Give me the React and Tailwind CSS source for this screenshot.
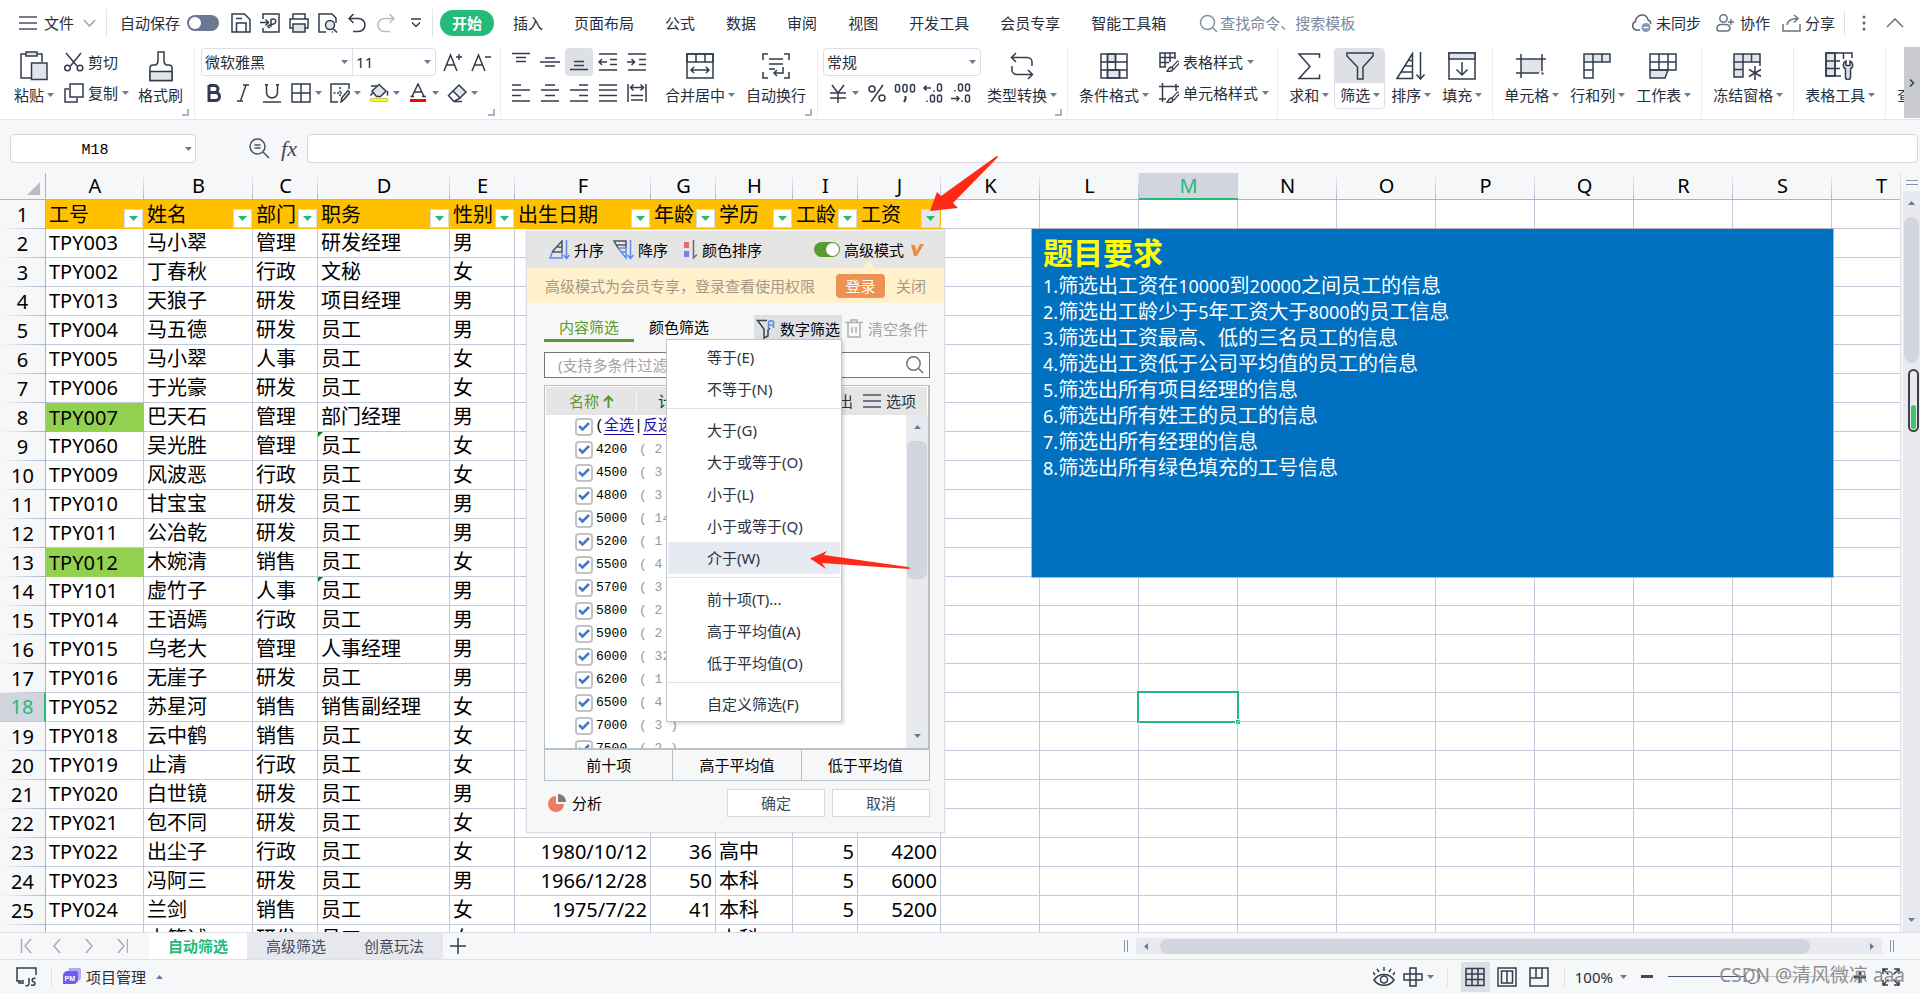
import React from "react";

const INK = "#333c4d";
const SOFT = "#e1e4e8";

/* ---------- drawing helpers ---------- */

function Ic({ w = 20, h = 20, color = INK, sw = 1.5, children, className = "" }) {
  return (
    <svg
      aria-hidden="true"
      width={w}
      height={h}
      viewBox={`0 0 ${w} ${h}`}
      fill="none"
      stroke={color}
      strokeWidth={sw}
      className={`shrink-0 ${className}`}
    >
      {children}
    </svg>
  );
}

function Caret({ up = false, className = "" }) {
  return (
    <svg aria-hidden="true" width="7" height="4" viewBox="0 0 7 4" fill="#6c7a96" className={`shrink-0 ${className}`}>
      <path d={up ? "M0 4 3.500 0 7 4z" : "M0 0h7L3.500 4z"} />
    </svg>
  );
}

const Brush = () => (
  <>
    <path d="M20 9.500 13.500 16.500" strokeWidth="4" />
    <path d="M19.500 10 14 16" strokeWidth="1.500" stroke="#fff" />
    <path d="M7.500 19.500c2-.6 1.500-3.500 4-4.200 2.500-.4 3 2 1.500 3.300-1.500 1.200-3.500 1.200-5.500.9z" fill={SOFT} />
  </>
);

/* ---------- top menu ---------- */

const menuTabs = ["插入", "页面布局", "公式", "数据", "审阅", "视图", "开发工具", "会员专享", "智能工具箱"];

function IconButton({ label, children, className = "" }) {
  return (
    <button type="button" aria-label={label} className={`flex shrink-0 items-center justify-center ${className}`}>
      {children}
    </button>
  );
}

function MenuBar() {
  return (
    <header className="flex h-[46px] shrink-0 items-center bg-white pl-[18px] pr-4">
      <button type="button" className="flex items-center">
        <Ic w={20} h={16} color="#4b5464">
          <path d="M1 2h18M1 8h18M1 14h18" />
        </Ic>
        <span className="ml-1.5">文件</span>
        <Ic w={13} h={8} color="#9aa1ad" className="ml-[9px]">
          <path d="M1 1l5.500 6L12 1" />
        </Ic>
      </button>
      <span className="ml-2.5 h-7 w-px bg-[#e1e3e8]" />
      <label className="ml-[13px] flex items-center gap-[7px]">
        自动保存
        <span className="relative flex">
          <input type="checkbox" className="peer h-4 w-8 appearance-none rounded-full bg-[#6c7791]" />
          <span className="pointer-events-none absolute left-0.5 top-0.5 size-3 rounded-full bg-white" />
        </span>
      </label>
      <div className="ml-3 flex items-center gap-[9px]">
        <IconButton label="保存">
          <Ic>
            <path d="M1 1h12.500L19 6.500V19H1z" />
            <path d="M5.500 19v-9h9.500v9M5 5.500h6" />
          </Ic>
        </IconButton>
        <IconButton label="输出为PDF">
          <Ic>
            <path d="M3 6V1h16v18H3v-4M0 9.500h8M5.500 6.500l3 3-3 3" />
            <path d="M11 14V6.500c4-1.500 5.500.5 4.500 3-1 2-3.500 2-6 2.500-2 .8-2 3 .5 2.500" />
          </Ic>
        </IconButton>
        <IconButton label="打印">
          <Ic>
            <path d="M4 6V1h12v5M4 15H1V6h18v9h-3" />
            <path d="M4 11h12v8H4z" fill={SOFT} />
          </Ic>
        </IconButton>
        <IconButton label="打印预览">
          <Ic>
            <path d="M8 19H1V1h13l4 4v5" />
            <circle cx="12" cy="12" r="4.500" fill={SOFT} />
            <path d="M15 15.500l4 4M15 19h-1" />
          </Ic>
        </IconButton>
        <IconButton label="撤销">
          <Ic>
            <path d="M6.500 1 2 5.500 6.500 10M2 5.500h9.500a6 6 0 0 1 0 13H6" />
          </Ic>
        </IconButton>
        <IconButton label="恢复">
          <Ic color="#b9bdc4">
            <path d="M13.500 1 18 5.500 13.500 10M18 5.500H8.500a6 6 0 0 0 0 13H14" />
          </Ic>
        </IconButton>
        <IconButton label="更多" className="ml-[5px]">
          <Ic w={12} h={10}>
            <path d="M1 1h10M2 4.500l4 4 4-4" />
          </Ic>
        </IconButton>
      </div>
      <span className="ml-2.5 h-7 w-px bg-[#e1e3e8]" />
      <nav className="ml-[7px] flex items-center gap-[7px]">
        <button type="button" className="h-[26px] rounded-full bg-[#23ba7a] px-3 font-bold text-white">
          开始
        </button>
        {menuTabs.map((t) => (
          <button key={t} type="button" className="shrink-0 whitespace-nowrap px-3">
            {t}
          </button>
        ))}
      </nav>
      <label className="ml-[21px] flex items-center gap-0.5">
        <Ic w={19} h={19} color="#8791a8">
          <circle cx="8.500" cy="8.500" r="7" />
          <path d="M13.500 13.500l4.500 4.500" />
        </Ic>
        <input
          aria-label="查找"
          placeholder="查找命令、搜索模板"
          className="w-36 bg-transparent outline-none placeholder:text-[#7d879e] placeholder:opacity-100"
        />
      </label>
      <div className="ml-auto flex shrink-0 items-center">
        <button type="button" className="flex items-center gap-1">
          <Ic w={21} h={18} color="#5a6474">
            <path d="M9 16H5a4.500 4.500 0 0 1-.5-8.500C4.500 4 7.500 1 11 1c3 0 5.500 2 6 5 1.500.5 3 2 2.500 4" />
            <circle cx="15" cy="13.500" r="4.500" fill="#8497b5" stroke="none" />
            <path d="M12.500 13.500h5" stroke="#fff" />
          </Ic>
          未同步
        </button>
        <button type="button" className="ml-[15px] flex items-center gap-1.5">
          <Ic w={18} h={18} color="#6a7383">
            <circle cx="7.500" cy="4.500" r="3.700" />
            <path d="M1 15c0-3 2-4.500 4-4.500h5c2 0 3.500 1 4 3.500 0 2-1 3-3 3H3c-1.500 0-2-1-2-2z M12 8h6M15 5v6" />
          </Ic>
          协作
        </button>
        <button type="button" className="ml-3 flex items-center gap-1">
          <Ic w={19} h={18} color="#6a7383">
            <path d="M1 10v7h17v-7M5 11c.5-4.500 4-6.500 11-6.500M12 1l4 3.500-4 4" />
          </Ic>
          分享
        </button>
        <span className="ml-[9px] h-[26px] w-px bg-[#e1e3e8]" />
        <IconButton label="选项" className="ml-[17px]">
          <svg width="4" height="16" viewBox="0 0 4 16" fill="#5a6474">
            <circle cx="2" cy="2" r="1.500" />
            <circle cx="2" cy="8" r="1.500" />
            <circle cx="2" cy="14" r="1.500" />
          </svg>
        </IconButton>
        <IconButton label="收起功能区" className="ml-5">
          <Ic w={18} h={10} color="#6a7383">
            <path d="M1 9l8-8 8 8" />
          </Ic>
        </IconButton>
      </div>
    </header>
  );
}

/* ---------- ribbon ---------- */

function Big({ label, caret = true, active = false, children }) {
  return (
    <button
      type="button"
      className={`flex h-[61px] shrink-0 flex-col items-stretch rounded-sm border ${
        active ? "border-[#dde1e6]" : "border-transparent"
      }`}
    >
      <span className={`flex h-[34px] items-center justify-center ${active ? "bg-[#dde1e6]" : ""}`}>{children}</span>
      <span className="flex h-6 items-center justify-center gap-[3px] whitespace-nowrap px-[5px]">
        {label}
        {caret && <Caret className="-mr-px" />}
      </span>
    </button>
  );
}

function Group({ children, corner = false, className = "" }) {
  return (
    <div className={`relative flex h-[72px] shrink-0 border-r border-[#eaecef] px-[5px] pt-0.5 ${className}`}>
      {children}
      {corner && (
        <svg aria-hidden="true" width="7" height="7" className="absolute bottom-0.5 right-[5px]" fill="none" stroke="#a9b4c6" strokeWidth="2">
          <path d="M6 0v6H0" />
        </svg>
      )}
    </div>
  );
}

function Cell({ label, caret = false, active = false, children }) {
  return (
    <button type="button" aria-label={label} className="flex shrink-0 items-center">
      <span className={`flex size-7 items-center justify-center rounded-sm ${active ? "bg-[#dde1e6]" : ""}`}>{children}</span>
      {caret && <Caret className="mr-1" />}
    </button>
  );
}

function Small({ label, caret = false, children }) {
  return (
    <button type="button" className="flex h-7 items-center gap-1 whitespace-nowrap">
      {children}
      {label}
      {caret && <Caret />}
    </button>
  );
}

function Pick({ label, value, className }) {
  return (
    <span className={`relative flex h-7 items-center border border-[#dcdfe5] ${className}`}>
      <select aria-label={label} className="h-full w-full appearance-none bg-transparent pl-[3px] outline-none">
        <option>{value}</option>
      </select>
      <Caret className="pointer-events-none absolute right-1" />
    </span>
  );
}

function Ribbon() {
  return (
    <div className="relative z-10 flex h-[74px] shrink-0 overflow-hidden border-b border-[#e3e5e9] bg-white">
      <Group corner className="pl-2">
        <Big label="粘贴">
          <Ic w={28} h={30}>
            <path d="M7 3H1v24h10M17 3h5v8" />
            <path d="M6 1h11v4H6z" fill={SOFT} />
            <path d="M11.500 12H27v16.500H11.500z" fill={SOFT} />
          </Ic>
        </Big>
        <div className="ml-[5px] mr-[3px] flex flex-col gap-[3px]">
          <Small label="剪切">
            <Ic>
              <path d="M2 1l11 13M17 1 6.500 14" />
              <circle cx="3.500" cy="16" r="2.800" />
              <circle cx="16" cy="16" r="2.800" />
            </Ic>
          </Small>
          <Small label="复制" caret>
            <Ic>
              <path d="M5 6H1v13h12v-4" />
              <path d="M6 1h13v13H6z" fill="#fff" />
            </Ic>
          </Small>
        </div>
        <Big label="格式刷" caret={false}>
          <Ic w={24} h={31}>
            <path d="M1 29.500V17c0-2 1-3 3-3h2.500C8 13.500 9 12 9 10V1h6v9c0 2 1 3.500 2.500 4H20c2 0 3 1 3 3v12.500z" />
            <path d="M1 20.500h22v9H1z" fill={SOFT} />
          </Ic>
        </Big>
      </Group>

      <Group corner>
        <div className="flex flex-col gap-[3px]">
          <div className="flex">
            <Pick label="字体" value="微软雅黑" className="ml-px w-[152px] rounded-l-sm" />
            <Pick label="字号" value="11" className="-ml-px mr-[3px] w-[84px] rounded-r-sm" />
            <Cell label="增大字号">
              <Ic w={20} h={20}>
                <path d="M1 19 7.500 3 14 19M3.500 13h8M13 5h6M16 2v6" />
              </Ic>
            </Cell>
            <Cell label="减小字号">
              <Ic w={20} h={20}>
                <path d="M1 19 7.500 3 14 19M3.500 13h8M14 5h6" />
              </Ic>
            </Cell>
          </div>
          <div className="flex">
            <span className="flex gap-px">
              <Cell label="加粗">
                <Ic w={14} h={18} sw={3}>
                  <path d="M2 1.500h5.500a3.500 3.500 0 0 1 0 7H2m0 0h6.500a4 4 0 0 1 0 8H2zM2 1v15" />
                </Ic>
              </Cell>
              <Cell label="倾斜">
                <Ic w={12} h={18}>
                  <path d="M9 1 3.500 17M6 1h6M0 17h6" />
                </Ic>
              </Cell>
              <Cell label="下划线">
                <Ic w={20} h={19}>
                  <path d="M4.500 0v8.500a5.500 5.500 0 0 0 11 0V0M1 18h18M3 .7h3M14 .7h3" />
                </Ic>
              </Cell>
            </span>
            <span className="ml-px flex">
              <Cell label="边框" caret>
                <Ic>
                  <path d="M1 1h18v18H1zM10 1v18M1 10h18" />
                </Ic>
              </Cell>
              <Cell label="绘图边框" caret>
                <Ic>
                  <path d="M8 19H1V1h18v5" />
                  <path d="M3.500 10H12M10 4v9" strokeDasharray="2 1.500" />
                  <path d="M11 19l1-4.500 6-7 2 2-6 7z" fill={SOFT} />
                </Ic>
              </Cell>
              <Cell label="填充颜色" caret>
                <Ic>
                  <path d="M3 8 10 1.500 17 8l-5.500 5.500h-4z" fill={SOFT} />
                  <path d="M2 3h6M1.500 12.500 4 9.500M18.500 12.500V8" />
                  <rect x="1" y="15.500" width="18" height="3" rx="1.500" fill="#ff0" stroke="#9a9a50" strokeWidth=".5" />
                </Ic>
              </Cell>
              <Cell label="字体颜色" caret>
                <Ic>
                  <path d="M4 13.500 10 1l6 12.500M6.500 9h7M2.500 13.500H6M14 13.500h4" />
                  <path d="M2 17.500h16" stroke="#f00" strokeWidth="3" />
                </Ic>
              </Cell>
              <Cell label="清除" caret>
                <Ic>
                  <path d="M6 8 12 2l7 7-6 6z" fill={SOFT} />
                  <path d="M6 8l-4.500 4.500 5.500 6 6-3.500M7 18.500h8" />
                </Ic>
              </Cell>
            </span>
          </div>
        </div>
      </Group>

      <Group corner>
        <div className="mx-px flex flex-col gap-[3px]">
          <div className="flex gap-px">
            <Cell label="顶端对齐">
              <Ic>
                <path d="M1 1.500h18M5 5.500h10M5 9.500h10" />
              </Ic>
            </Cell>
            <Cell label="垂直居中">
              <Ic>
                <path d="M5 6h10M0 10h20M5 14h10" />
              </Ic>
            </Cell>
            <Cell label="底端对齐" active>
              <Ic>
                <path d="M5 9.500h10M5 13.500h10M1 17.500h18" />
              </Ic>
            </Cell>
            <Cell label="减少缩进">
              <Ic>
                <path d="M1 2h18M12 7.500h7M12 12.500h7M1 18h18M9 10H1M4 7l-3 3 3 3" />
              </Ic>
            </Cell>
            <Cell label="增加缩进">
              <Ic>
                <path d="M1 2h18M12 7.500h7M12 12.500h7M1 18h18M0 10h7M4.500 7l3 3-3 3" />
              </Ic>
            </Cell>
          </div>
          <div className="flex gap-px">
            <Cell label="左对齐">
              <Ic>
                <path d="M1 2h9M1 7h18M1 12.500h9M1 18h18" />
              </Ic>
            </Cell>
            <Cell label="水平居中">
              <Ic>
                <path d="M5 2h10M1 7h18M5 12.500h10M1 18h18" />
              </Ic>
            </Cell>
            <Cell label="右对齐">
              <Ic>
                <path d="M10 2h9M1 7h18M10 12.500h9M1 18h18" />
              </Ic>
            </Cell>
            <Cell label="两端对齐">
              <Ic>
                <path d="M1 2h18M1 7h18M1 12.500h18M1 18h18" />
              </Ic>
            </Cell>
            <Cell label="分散对齐">
              <Ic>
                <path d="M1 1v18M19 1v18M4 12.500h12M4 17h12M3.500 4.500h13M6.500 1.500l-3 3 3 3M13.500 1.500l3 3-3 3" />
              </Ic>
            </Cell>
          </div>
        </div>
        <span className="w-[7px]" />
        <Big label="合并居中">
          <Ic w={28} h={26}>
            <path d="M1 1h26v24H1z" />
            <path d="M1 1h26v8H1zM10 1v8M19 1v8M5 17h18M8 14l-3 3 3 3M20 14l3 3-3 3" />
          </Ic>
        </Big>
        <Big label="自动换行" caret={false}>
          <Ic w={28} h={26}>
            <path d="M6 1H1v6M22 1h5v6M6 25H1v-6M22 25h5v-6M7 6h14M7 11h14M7 16h6M21 14v6H12M15 17l-3 3 3 3" />
          </Ic>
        </Big>
      </Group>

      <Group corner>
        <div className="flex flex-col gap-[3px]">
          <Pick label="数字格式" value="常规" className="w-[158px] rounded-sm" />
          <div className="flex pl-px">
            <Cell label="货币" caret>
              <Ic w={18} h={19}>
                <path d="M3 1l6 8 6-8M9 9v10M1 9h16M1 14h16" />
              </Ic>
            </Cell>
            <Cell label="百分比">
              <Ic w={18} h={18}>
                <circle cx="4" cy="5" r="3" />
                <circle cx="14" cy="14" r="3" />
                <path d="M15 1 3 18" />
              </Ic>
            </Cell>
            <Cell label="千位分隔">
              <Ic w={22} h={20}>
                <rect x="1.500" y="1.500" width="4" height="7.500" rx="2" />
                <rect x="9" y="1.500" width="4" height="7.500" rx="2" />
                <rect x="16.500" y="1.500" width="4" height="7.500" rx="2" />
                <path d="M11.500 13v3l-1.500 3" strokeWidth="2" />
              </Ic>
            </Cell>
            <Cell label="增加小数位">
              <Ic w={22} h={20}>
                <rect x="15.500" y="1" width="4" height="7" rx="2" />
                <rect x="8.500" y="12" width="4" height="7" rx="2" />
                <rect x="15.500" y="12" width="4" height="7" rx="2" />
                <path d="M9 5H2M4.500 2.500 2 5l2.500 2.500M12 7.500v1.500M5 17.500V19" />
              </Ic>
            </Cell>
            <Cell label="减少小数位">
              <Ic w={22} h={20}>
                <rect x="8.500" y="1" width="4" height="7" rx="2" />
                <rect x="15.500" y="1" width="4" height="7" rx="2" />
                <rect x="15.500" y="12" width="4" height="7" rx="2" />
                <path d="M1 15.500h8M6.500 13l2.500 2.500L6.500 18M12 17.500V19M5 7v1.500" />
              </Ic>
            </Cell>
          </div>
        </div>
        <Big label="类型转换">
          <Ic w={24} h={28}>
            <path d="M6 1 1.500 5.500 6 10M1.500 5.500H17c3 0 5 2 5 4.500v4M18 18l4.500 4.500L18 27M22.500 22.500H7c-3 0-5-2-5-4.500v-4" />
          </Ic>
        </Big>
      </Group>

      <Group className="pr-2">
        <Big label="条件格式">
          <Ic w={28} h={26}>
            <path d="M7.500 1h8v8h-8zM7.500 17h12v8h-12z" fill={SOFT} />
            <path d="M1 1h26v24H1zM1 9h26M1 17h26M7.500 1v24M15.500 1v16M19.500 17v8" />
          </Ic>
        </Big>
        <div className="ml-[5px] flex flex-col gap-[3px]">
          <Small label="表格样式" caret>
            <Ic>
              <path d="M7 15H1V1h15v6M1 5.500h15M1 10.500h9M6 1v14M11 1v9" />
              <Brush />
            </Ic>
          </Small>
          <Small label="单元格样式" caret>
            <Ic>
              <path d="M3.500 0v19M0 3.500h20M17 1v7M0 16h7" />
              <Brush />
            </Ic>
          </Small>
        </div>
      </Group>

      <Group>
        <Big label="求和">
          <Ic w={24} h={27}>
            <path d="M22.500 5V1H2l11 12.500L2 25.500h20.500v-4" />
          </Ic>
        </Big>
        <Big label="筛选" active>
          <Ic w={28} h={28}>
            <path d="M1 1h26v3L17 15v12h-5.500V15L1 4z" />
          </Ic>
        </Big>
        <Big label="排序">
          <Ic w={30} h={28}>
            <path d="M1 26.500 16.500 1.500v25zM4.500 20h12M8 14h8.500M12 8.500h4M24.500 0v27M20.500 22.500l4 4.500 4-4.500" />
          </Ic>
        </Big>
        <Big label="填充">
          <Ic w={28} h={28}>
            <path d="M1 1h26v26H1z" />
            <path d="M1 1h26v6H1z" fill={SOFT} />
            <path d="M14 10v13M8.500 17.500 14 23l5.500-5.500" />
          </Ic>
        </Big>
      </Group>

      <Group>
        <Big label="单元格">
          <Ic w={30} h={24}>
            <path d="M5 5h21v14H5z" fill={SOFT} stroke="none" />
            <path d="M5 0v24M26 0v17M0 5h30M0 19h23" />
            <path d="M25.500 19.500h2" strokeWidth="2" />
          </Ic>
        </Big>
        <Big label="行和列">
          <Ic w={28} h={26}>
            <path d="M1 1h26v8H1z" fill={SOFT} />
            <path d="M1 9v16h9V9M1 17h9M10 1v8M19 1v8" />
          </Ic>
        </Big>
        <Big label="工作表">
          <Ic w={28} h={26}>
            <path d="M1 17h18l-3 8H1z" fill={SOFT} />
            <path d="M1 1h26v16H1zM1 9h26M10 1v16M19 1v16" />
          </Ic>
        </Big>
      </Group>

      <Group>
        <Big label="冻结窗格">
          <Ic w={30} h={27}>
            <path d="M1 1h26v8H10v15H1z" fill={SOFT} />
            <path d="M27 9v4M1 9h9M1 16.500h9M10 1v8M18.500 1v8" />
            <path d="M22 13v14M16 16.500l12 7M28 16.500l-12 7" />
          </Ic>
        </Big>
      </Group>
      <Group>
        <Big label="表格工具">
          <Ic w={30} h={28}>
            <path d="M1 1h9v23H1z" fill={SOFT} />
            <path d="M16 24H1V1h26v5M1 9h14M1 16.500h14M10 1v23M18.500 1v6" />
            <path d="M21 9a4.500 4.500 0 0 0-.5 8v8.500c0 2.500 5 2.500 5 0V17a4.500 4.500 0 0 0-.5-8v4.500h-4z" fill={SOFT} />
          </Ic>
        </Big>
      </Group>
      <div className="flex min-w-0 flex-1 overflow-hidden pl-[5px] pt-0.5">
        <Big label="查找">
          <span />
        </Big>
      </div>
      <button
        type="button"
        aria-label="向右滚动"
        className="mt-px flex h-[71px] w-4 shrink-0 items-center justify-center bg-[#c9cbd1]"
      >
        <Ic w={6} h={8}>
          <path d="M1 .5l3.500 3.500L1 7.500" />
        </Ic>
      </button>
    </div>
  );
}

function FormulaBar() {
  return (
    <div className="flex h-[53px] shrink-0 items-center pl-2.5 pr-0.5 pt-1">
      <div className="relative flex items-center">
        <input
          aria-label="名称框"
          defaultValue="M18"
          className="h-[29px] w-[186px] rounded-sm border border-[#d5d8de] bg-white pr-4 pt-1 text-center font-['Liberation_Mono','Noto_Sans_CJK_SC',monospace] text-black outline-none"
        />
        <Caret className="pointer-events-none absolute right-1" />
      </div>
      <IconButton label="查找" className="ml-[53px]">
        <Ic w={21} h={21} color="#4b5464">
          <circle cx="8.500" cy="8.500" r="7.500" />
          <path d="M14 14l6 6M5.500 7h6M5.500 10h6" />
        </Ic>
      </IconButton>
      <button
        type="button"
        aria-label="插入函数"
        className="ml-2.5 w-[18px] font-['Liberation_Serif','Noto_Sans_CJK_SC',serif] text-[22px] italic leading-7 text-[#3f4857]"
      >
        fx
      </button>
      <input aria-label="编辑栏" className="ml-[9px] h-[29px] min-w-0 flex-1 rounded-sm border border-[#d5d8de] bg-white px-2 outline-none" />
    </div>
  );
}

/* ---------- sheet ---------- */

const columns = [
  ["A", "w-[98px]"],
  ["B", "w-[109px]"],
  ["C", "w-[65px]"],
  ["D", "w-[132px]"],
  ["E", "w-[65px]"],
  ["F", "w-[136px]"],
  ["G", "w-[65px]"],
  ["H", "w-[77px]"],
  ["I", "w-[65px]"],
  ["J", "w-[83px]"],
  ["K", "w-[99px]"],
  ["L", "w-[99px]"],
  ["M", "w-[99px]"],
  ["N", "w-[99px]"],
  ["O", "w-[99px]"],
  ["P", "w-[99px]"],
  ["Q", "w-[99px]"],
  ["R", "w-[99px]"],
  ["S", "w-[99px]"],
  ["T", "w-[99px]"],
];

const headings = ["工号", "姓名", "部门", "职务", "性别", "出生日期", "年龄", "学历", "工龄", "工资"];

const people = [
  ["TPY003", "马小翠", "管理", "研发经理", "男"],
  ["TPY002", "丁春秋", "行政", "文秘", "女"],
  ["TPY013", "天狼子", "研发", "项目经理", "男"],
  ["TPY004", "马五德", "研发", "员工", "男"],
  ["TPY005", "马小翠", "人事", "员工", "女"],
  ["TPY006", "于光豪", "研发", "员工", "女"],
  ["TPY007", "巴天石", "管理", "部门经理", "男"],
  ["TPY060", "吴光胜", "管理", "员工", "女"],
  ["TPY009", "风波恶", "行政", "员工", "女"],
  ["TPY010", "甘宝宝", "研发", "员工", "男"],
  ["TPY011", "公冶乾", "研发", "员工", "男"],
  ["TPY012", "木婉清", "销售", "员工", "女"],
  ["TPY101", "虚竹子", "人事", "员工", "男"],
  ["TPY014", "王语嫣", "行政", "员工", "男"],
  ["TPY015", "乌老大", "管理", "人事经理", "男"],
  ["TPY016", "无崖子", "研发", "员工", "男"],
  ["TPY052", "苏星河", "销售", "销售副经理", "女"],
  ["TPY018", "云中鹤", "销售", "员工", "女"],
  ["TPY019", "止清", "行政", "员工", "女"],
  ["TPY020", "白世镜", "研发", "员工", "男"],
  ["TPY021", "包不同", "研发", "员工", "女"],
  ["TPY022", "出尘子", "行政", "员工", "女", "1980/10/12", "36", "高中", "5", "4200"],
  ["TPY023", "冯阿三", "研发", "员工", "男", "1966/12/28", "50", "本科", "5", "6000"],
  ["TPY024", "兰剑", "销售", "员工", "女", "1975/7/22", "41", "本科", "5", "5200"],
  ["TPY025", "古笃诚", "研发", "员工", "女", "1981/7/21", "35", "本科", "4", "3500"],
];

const greenIds = ["TPY007", "TPY012"];
const flagged = ["TPY060", "TPY101"];
const numeric = [5, 6, 8, 9];

function RowHead({ n }) {
  const on = n === 18;
  return (
    <th
      scope="row"
      className={`p-0 text-center font-normal leading-7 ${
        on
          ? "border-b border-r-2 border-b-[#c3c9da] border-r-[#23ba7a] bg-[#d2d5dd] text-[#23ba7a]"
          : "border-r border-[#aab4cc] bg-[#f6f7f9] bg-[linear-gradient(to_right,transparent,#aab4cc)] bg-[length:100%_1px] bg-bottom bg-no-repeat"
      }`}
    >
      {n}
    </th>
  );
}

function Sheet() {
  return (
    <table className="w-[1931px] table-fixed border-separate border-spacing-0 bg-white text-xl text-black">
      <colgroup>
        <col className="w-[46px]" />
        {columns.map(([c, w]) => (
          <col key={c} className={w} />
        ))}
      </colgroup>
      <thead>
        <tr className="h-[27px]">
          <th className="border-b border-r border-[#aab4cc] bg-[#f6f7f9] p-0">
            <svg aria-hidden="true" width="13" height="13" className="ml-auto mr-[5px] mt-1" fill="#b9bcc2">
              <path d="M13 0v13H0z" />
            </svg>
          </th>
          {columns.map(([c]) => (
            <th
              key={c}
              scope="col"
              className={`p-0 text-center font-normal leading-6 ${
                c === "M"
                  ? "border-b-2 border-[#23ba7a] bg-[#d2d5dd] text-[#23ba7a]"
                  : "border-b border-[#aab4cc] bg-[#f6f7f9] bg-[linear-gradient(to_bottom,transparent,#aab4cc)] bg-[length:1px_100%] bg-right bg-no-repeat"
              }`}
            >
              {c}
            </th>
          ))}
        </tr>
      </thead>
      <tbody>
        <tr className="h-[29px]">
          <RowHead n={1} />
          {columns.map(([c], i) =>
            headings[i] ? (
              <td key={c} className="relative bg-[#ffc000] p-0 pl-[3px] leading-7">
                {headings[i]}
                <button
                  type="button"
                  aria-label={`筛选${headings[i]}`}
                  className={`absolute bottom-px right-px flex size-[19px] items-center justify-center border border-[#d5d9e2] ${
                    c === "J" ? "bg-[#e6e8ee]" : "bg-white"
                  }`}
                >
                  <svg width="9" height="5" fill="#23ba7a">
                    <path d="M0 0h9L4.500 5z" />
                  </svg>
                </button>
              </td>
            ) : (
              <td key={c} className="border-b border-r border-[#c3c9da] p-0" />
            ),
          )}
        </tr>
        {people.map((p, r) => (
          <tr key={p[0]} className="h-[29px]">
            <RowHead n={r + 2} />
            {columns.map(([c], i) => (
              <td
                key={c}
                className={`relative whitespace-nowrap p-0 px-[3px] leading-7 ${numeric.includes(i) ? "text-right" : ""} ${
                  i === 0 && greenIds.includes(p[0]) ? "bg-[#92d050]" : "border-b border-r border-[#c3c9da]"
                }`}
              >
                {p[i]}
                {i === 3 && flagged.includes(p[0]) && (
                  <svg aria-hidden="true" width="5" height="5" className="absolute left-0 top-0" fill="#0a8019">
                    <path d="M0 0h5L0 5z" />
                  </svg>
                )}
                {c === "M" && r === 16 && (
                  <span className="absolute -inset-0.5 border-2 border-[#23ba7a]">
                    <span className="absolute -bottom-1 -right-1 size-1.5 border border-white bg-[#23ba7a]" />
                  </span>
                )}
              </td>
            ))}
          </tr>
        ))}
      </tbody>
    </table>
  );
}

const tasks = [
  "1.筛选出工资在10000到20000之间员工的信息",
  "2.筛选出工龄少于5年工资大于8000的员工信息",
  "3.筛选出工资最高、低的三名员工的信息",
  "4.筛选出工资低于公司平均值的员工的信息",
  "5.筛选出所有项目经理的信息",
  "6.筛选出所有姓王的员工的信息",
  "7.筛选出所有经理的信息",
  "8.筛选出所有绿色填充的工号信息",
];

/* Digits are set slightly smaller than the Chinese characters around them. */
function TaskLine({ text }) {
  return (
    <p>
      {text.split(/([\d.]+)/).map((part, i) =>
        i % 2 ? (
          <span key={i} className="text-lg leading-none">
            {part}
          </span>
        ) : (
          part
        ),
      )}
    </p>
  );
}

function TaskNote() {
  return (
    <section className="absolute left-[1031px] top-[55px] h-[350px] w-[803px] border border-[#b5b5b5] bg-[#0070c0] px-[11px] pt-1 text-xl leading-[26px] text-white">
      <h2 className="text-3xl font-bold leading-10 text-[#ff0]">题目要求</h2>
      {tasks.map((t) => (
        <TaskLine key={t} text={t} />
      ))}
    </section>
  );
}

/* ---------- filter panel ---------- */

const values = [
  ["4200", 2],
  ["4500", 3],
  ["4800", 3],
  ["5000", 14],
  ["5200", 1],
  ["5500", 4],
  ["5700", 3],
  ["5800", 2],
  ["5900", 2],
  ["6000", 32],
  ["6200", 1],
  ["6500", 4],
  ["7000", 3],
  ["7500", 2],
];

const menuGroups = [
  ["等于(E)", "不等于(N)"],
  ["大于(G)", "大于或等于(O)", "小于(L)", "小于或等于(Q)", "介于(W)"],
  ["前十项(T)...", "高于平均值(A)", "低于平均值(O)"],
  ["自定义筛选(F)"],
];

function Tick({ label }) {
  return (
    <span className="relative flex">
      <input
        type="checkbox"
        defaultChecked
        aria-label={label}
        className="size-[18px] appearance-none rounded-sm border-2 border-[#c3c3c3] bg-white"
      />
      <svg aria-hidden="true" width="12" height="9" className="pointer-events-none absolute left-[3px] top-1" fill="none" stroke="#4377c9" strokeWidth="2.500">
        <path d="M1 4l3.500 3.500L11 1" />
      </svg>
    </span>
  );
}

function NumberMenu() {
  return (
    <div
      role="menu"
      className="absolute left-[139px] top-[109px] flex w-[176px] flex-col border border-[#c4c6ca] bg-white pb-px pt-px text-[#2b3340] shadow-[2px_2px_3px_rgba(0,0,0,0.15)]"
    >
      {menuGroups.map((g, i) => (
        <div key={i} className={`flex flex-col px-px ${i ? "mt-[3px] border-t border-[#dfe1e5] pt-[5px]" : ""}`}>
          {g.map((m) => (
            <button
              key={m}
              type="button"
              role="menuitem"
              className={`h-8 pl-[39px] text-left ${m === "介于(W)" ? "bg-[#e7eaf0]" : ""}`}
            >
              {m}
            </button>
          ))}
        </div>
      ))}
    </div>
  );
}

function FilterPanel() {
  return (
    <section className="absolute left-[526px] top-14 flex h-[604px] w-[419px] flex-col border border-[#dcdde0] bg-[#f7f7f7] pt-px text-black shadow-[0_0_2px_rgba(0,0,0,0.1)]">
      <div className="flex h-[37px] shrink-0 items-center bg-[#e5e5e5] pl-[22px]">
        <button type="button" className="flex items-center gap-1">
          <Ic w={21} h={20} color="#4b5464">
            <path d="M3 12 13 1v11M8.500 7H13M4 12h9" />
            <path d="M3.500 12 1 18h12v-6" stroke="#5b8de8" />
            <path d="M17.500 0v18M14.500 15l3 3.500 3-3.500" stroke="#5b8de8" />
          </Ic>
          升序
        </button>
        <button type="button" className="ml-[9px] flex items-center gap-1">
          <Ic w={21} h={20} color="#4b5464">
            <path d="M13 8V1H1l4 7M3 5h10" />
            <path d="M5 8h8v10L5 8M7.500 12H13" stroke="#5b8de8" />
            <path d="M17.500 0v18M14.500 15l3 3.500 3-3.500" stroke="#5b8de8" />
          </Ic>
          降序
        </button>
        <button type="button" className="ml-[15px] flex items-center gap-[5px]">
          <Ic w={14} h={20} color="#6a6a6a">
            <path d="M1 2h5v6H1z" fill="#e66a6a" stroke="none" />
            <path d="M1 11h5v6H1z" fill="#6f83ea" stroke="none" />
            <path d="M10.500 0v18l3.500-3.500" />
          </Ic>
          颜色排序
        </button>
        <label className="ml-[52px] flex items-center gap-1">
          <span className="relative flex">
            <input type="checkbox" defaultChecked className="h-[15px] w-[26px] appearance-none rounded-full bg-[#5a9a32]" />
            <span className="pointer-events-none absolute right-px top-px size-[13px] rounded-full bg-white" />
          </span>
          高级模式
        </label>
        <svg aria-hidden="true" width="13" height="12" className="ml-[7px]" fill="#ee8b45">
          <path d="M0 1h4l1.500 6L9 0h4L6 12H3z" />
        </svg>
      </div>
      <div className="relative flex h-[35px] shrink-0 items-center bg-[#fff1cb] pl-[18px] text-[#a49a87]">
        <svg aria-hidden="true" width="12" height="7" className="absolute -top-[7px] left-[336px]" fill="#fff1cb">
          <path d="M6 0l6 7H0z" />
        </svg>
        高级模式为会员专享，登录查看使用权限
        <button type="button" className="ml-[21px] h-6 w-[49px] rounded-sm bg-[#ee9252] text-white">
          登录
        </button>
        <button type="button" className="ml-[11px]">
          关闭
        </button>
      </div>

      <div className="mt-3 flex h-[27px] shrink-0 pl-[17px]">
        <button type="button" className="h-[27px] w-[90px] border-b-[3px] border-[#5a9a32] text-[#5a9a32]">
          内容筛选
        </button>
        <button type="button" className="ml-[15px] h-[27px] border-b-[3px] border-transparent">
          颜色筛选
        </button>
        <button type="button" className="ml-[45px] flex h-[27px] w-[88px] items-center gap-1 bg-[#dde1e6] pl-0.5">
          <Ic w={20} h={20} color="#3b4354">
            <path d="M11 1.500H1.500L8 10v9l4-2v-6l2-2" />
            <path d="M12.500 9V4c0-3 5-3 5 0v5M12.500 6h5" stroke="#5b8de8" />
          </Ic>
          数字筛选
        </button>
        <button type="button" className="ml-[3px] flex h-[27px] items-center gap-[5px] text-[#a2a2a2]">
          <Ic w={18} h={19} color="#b0b0b0">
            <path d="M0 3.500h18M6 3V1h6v2M3 4v14h12V4M7 8v6M11 8v6" />
          </Ic>
          清空条件
        </button>
      </div>

      <label className="mx-[17px] mr-[14px] mt-2.5 flex h-[26px] shrink-0 items-center border border-[#757575] bg-white pl-[13px] pr-[5px]">
        <input
          aria-label="搜索"
          placeholder="(支持多条件过滤，例如：北京 上海)"
          className="min-w-0 flex-1 outline-none placeholder:text-[#a2a2a2] placeholder:opacity-100"
        />
        <Ic w={18} h={18} color="#6a7383">
          <circle cx="7.500" cy="7.500" r="6.700" />
          <path d="M12.500 12.500 17 17" />
        </Ic>
      </label>

      <div className="ml-[17px] mr-[14px] mt-[7px] flex h-[365px] shrink-0 flex-col overflow-hidden border border-b-2 border-r-2 border-[#b4c2cd] bg-white pt-px">
        <div className="mx-px flex h-7 shrink-0 items-center bg-[#e5e5e5] text-[#2b3340]">
          <button type="button" className="flex w-[91px] items-center gap-1 border-r border-[#fafafa] pl-[23px] text-[#5a9a32]">
            名称
            <Ic w={11} h={13} color="#5a9a32" sw={2}>
              <path d="M5.500 13V2M1 6l4.500-4.500L10 6" />
            </Ic>
          </button>
          <span className="ml-[21px]">计数</span>
          <button type="button" className="ml-auto">
            导出
          </button>
          <button type="button" className="ml-2.5 mr-[11px] flex items-center gap-[5px]">
            <Ic w={18} h={14} color="#4b5464">
              <path d="M0 1h18M0 7h18M0 13h18" />
            </Ic>
            选项
          </button>
        </div>
        <div className="flex min-h-0 flex-1">
          <ul className="min-w-0 flex-1 pl-[30px] font-['Liberation_Mono','Noto_Sans_CJK_SC',monospace] text-[13px]">
            <li className="flex h-[23px] items-center text-[15px]">
              <Tick label="全选" />
              <span className="ml-0.5">
                (
                <a href="#all" className="text-[#1a0dab] underline underline-offset-4">
                  全选
                </a>
                |
                <a href="#invert" className="text-[#1a0dab] underline underline-offset-4">
                  反选
                </a>
                )
              </span>
            </li>
            {values.map(([v, n]) => (
              <li key={v} className="flex h-[23px] items-center">
                <Tick label={v} />
                <span className="ml-[3px] w-[43px]">{v}</span>
                <span className="whitespace-pre text-[#999]">{`( ${n} )`}</span>
              </li>
            ))}
          </ul>
          <div className="flex w-[22px] shrink-0 flex-col items-center bg-[#e8eaf0] py-2.5">
            <Caret up />
            <span className="mt-3 h-[138px] w-5 rounded-md bg-[#d3d6df]" />
            <Caret className="mt-auto" />
          </div>
        </div>
      </div>

      <div className="ml-[17px] mr-[14px] flex h-[31px] shrink-0 divide-x divide-[#b4c2cd] border border-t-0 border-[#b4c2cd]">
        <button type="button" className="flex-1">
          前十项
        </button>
        <button type="button" className="flex-1">
          高于平均值
        </button>
        <button type="button" className="flex-1">
          低于平均值
        </button>
      </div>

      <div className="ml-[17px] mr-[14px] mt-2 flex h-7 shrink-0 items-center">
        <button type="button" className="flex items-center gap-1.5 pl-1">
          <svg aria-hidden="true" width="18" height="18">
            <path d="M8 2v8h8a8 8 0 1 1-8-8z" fill="#f07a5f" />
            <path d="M10 0a8 8 0 0 1 8 8h-8z" fill="#7c7c7c" />
          </svg>
          分析
        </button>
        <button type="button" className="ml-auto h-7 w-[98px] border border-[#d5d8de] bg-white text-[#434b5b]">
          确定
        </button>
        <button type="button" className="ml-[7px] h-7 w-[98px] border border-[#d5d8de] bg-white text-[#434b5b]">
          取消
        </button>
      </div>
      <NumberMenu />
    </section>
  );
}

function SheetArea() {
  return (
    <main className="relative flex min-h-0 flex-1">
      <div className="relative min-w-0 flex-1 overflow-hidden">
        <Sheet />
        <TaskNote />
        <FilterPanel />
      </div>
      <div className="flex w-5 shrink-0 flex-col items-end border-l border-[#dfe1e6]">
        <span className="flex h-[18px] w-[17px] shrink-0 items-center justify-center">
          <Ic w={12} h={5} color="#8994aa" sw={1}>
            <path d="M0 .5h12M0 4.500h12" />
          </Ic>
        </span>
        <div className="relative flex w-[17px] flex-1 flex-col items-center bg-[#e8eaf0] py-2.5">
          <Caret up />
          <span className="mt-3 h-[146px] w-[15px] rounded-full bg-[#d3d6df]" />
          <Caret className="mt-auto" />
          <span className="absolute right-px top-[178px] flex h-[63px] w-[11px] flex-col justify-end rounded-full border-2 border-[#3d4043] bg-[#e8eaf0] p-px">
            <span className="h-6 rounded-full bg-[#3fc46b]" />
          </span>
        </div>
      </div>
      <svg
        aria-hidden="true"
        width="72"
        height="58"
        viewBox="0 0 72 58"
        fill="#fe2a17"
        className="pointer-events-none absolute -top-[18px] left-[929px]"
      >
        <path d="M1 56 8 37l4 4L67 1.500q3-1.500 1.500 1L24 48l5 5z" />
      </svg>
      <svg
        aria-hidden="true"
        width="102"
        height="20"
        viewBox="0 0 102 20"
        fill="#fe2a17"
        className="pointer-events-none absolute left-[809px] top-[377px]"
      >
        <path d="M1 8.500 18 1l-3 4 84 12q3 1 1 2L13 13l4 6z" />
      </svg>
    </main>
  );
}

/* ---------- bottom bars ---------- */

function SheetTabs() {
  return (
    <div className="flex h-7 shrink-0 items-stretch border-y border-[#dfe1e6] bg-[#f6f7f9]">
      <div className="flex w-[149px] items-center gap-5 pl-5">
        {[
          ["第一张", "M1.500 1v14M11 1 5 8l6 7"],
          ["上一张", "M8 1 2 8l6 7"],
          ["下一张", "M2 1l6 7-6 7"],
          ["最后一张", "M2 1l6 7-6 7M11.500 1v14"],
        ].map(([l, d]) => (
          <IconButton key={l} label={l}>
            <Ic w={12} h={16} color="#a9adb5">
              <path d={d} />
            </Ic>
          </IconButton>
        ))}
      </div>
      <button type="button" className="w-[98px] bg-white font-bold text-[#23ba7a]">
        自动筛选
      </button>
      <button type="button" className="w-[98px] bg-[#e7e8ee] text-[#434b5b]">
        高级筛选
      </button>
      <button type="button" className="w-[98px] bg-[#e7e8ee] text-[#434b5b]">
        创意玩法
      </button>
      <IconButton label="新建工作表" className="ml-[7px]">
        <Ic w={16} h={16}>
          <path d="M8 0v16M0 8h16" />
        </Ic>
      </IconButton>
      <div className="ml-auto flex items-center gap-2 pr-[26px]">
        <Ic w={4} h={12} color="#8994aa" sw={1}>
          <path d="M.5 0v12M3.500 0v12" />
        </Ic>
        <div className="flex h-4 w-[746px] items-center bg-[#e8eaf0] px-2">
          <svg aria-hidden="true" width="4" height="7" fill="#6c7a96">
            <path d="M4 0v7L0 3.500z" />
          </svg>
          <span className="ml-3 h-[15px] w-[650px] rounded-full bg-[#d3d6df]" />
          <svg aria-hidden="true" width="4" height="7" fill="#6c7a96" className="ml-auto">
            <path d="M0 0v7l4-3.500z" />
          </svg>
        </div>
        <Ic w={4} h={12} color="#8994aa" sw={1}>
          <path d="M.5 0v12M3.500 0v12" />
        </Ic>
      </div>
    </div>
  );
}

function StatusBar() {
  return (
    <footer className="relative flex h-[33px] shrink-0 items-center bg-[#f6f7f9] pl-4 pr-5">
      <IconButton label="JS宏">
        <Ic w={22} h={20}>
          <path d="M8 14H1V1h19v7M3 14v2h5" />
          <path d="M13 11v5c0 2.500-1 3-3.500 2.500M19.500 11.500c-4-1-4 2.500-2 3.200 2.500.8 2 4.500-2.500 3.300" />
        </Ic>
      </IconButton>
      <span className="ml-[13px] h-[18px] w-px bg-[#dfe1e6]" />
      <button type="button" className="ml-[11px] flex items-center gap-[5px]">
        <svg aria-hidden="true" width="18" height="17">
          <path d="M6 0h10a2 2 0 0 1 2 2v7c0 3-2 4-4 4H4z" fill="#b3a7f8" />
          <path d="M5 3h8a2 2 0 0 1 2 2v6c0 3-2 5-5 5H0V8c0-3 2-5 5-5z" fill="#6d5cf0" />
          <text x="1.500" y="12.500" fontSize="7" fontWeight="bold" fill="#fff" fontFamily="Liberation Sans, sans-serif">
            PM
          </text>
        </svg>
        项目管理
        <Caret up className="ml-[5px]" />
      </button>

      <div className="ml-auto flex items-center">
        <IconButton label="护眼模式">
          <Ic w={22} h={20}>
            <path d="M1 13c5-7.500 15-7.500 20 0-5 7-15 7-20 0zM11 0v4M4 2l2 3M18 2l-2 3M0 5l2 3M22 5l-2 3" />
            <circle cx="11" cy="12.500" r="3.500" />
          </Ic>
        </IconButton>
        <button type="button" aria-label="阅读模式" className="ml-2 flex items-center gap-1">
          <Ic w={20} h={20}>
            <path d="M7 1h6v18H7zM1 7h18v6H1z" />
          </Ic>
          <Caret />
        </button>
        <span className="mx-[13px] h-5 w-px bg-[#dfe1e6]" />
        <IconButton label="普通视图" className="h-[30px] w-[29px] bg-[#dbdfe6]">
          <Ic>
            <path d="M1 1.500h18v17H1zM1 7h18M1 12.500h18M7 1.500v17M13 1.500v17" />
          </Ic>
        </IconButton>
        <IconButton label="页面布局" className="ml-[7px]">
          <Ic>
            <path d="M1 1h18v18H1zM4.500 4h11v12h-11zM10 4v12" />
          </Ic>
        </IconButton>
        <IconButton label="分页预览" className="ml-3">
          <Ic>
            <path d="M1 1h18v18H1zM7 1v10M1 11h12V1M13 11v0" />
          </Ic>
        </IconButton>
        <span className="mx-2.5 ml-[15px] h-5 w-px bg-[#dfe1e6]" />
        <button type="button" className="flex items-center gap-[7px]">
          100%
          <Caret />
        </button>
        <IconButton label="缩小" className="ml-3.5">
          <Ic w={12} h={3} sw={3} color="#3f4a60">
            <path d="M0 1.500h12" />
          </Ic>
        </IconButton>
        <input
          type="range"
          aria-label="显示比例"
          defaultValue="46"
          className="ml-[15px] h-4 w-[182px] appearance-none bg-[linear-gradient(to_right,#4a556b_46%,#c6cad3_46%)] bg-[length:100%_1px] bg-center bg-no-repeat [&::-webkit-slider-thumb]:size-[15px] [&::-webkit-slider-thumb]:appearance-none [&::-webkit-slider-thumb]:rounded-full [&::-webkit-slider-thumb]:border [&::-webkit-slider-thumb]:border-[#4a556b] [&::-webkit-slider-thumb]:bg-white"
        />
        <IconButton label="放大" className="ml-1">
          <Ic w={12} h={12} sw={3} color="#3f4a60">
            <path d="M0 6h12M6 0v12" />
          </Ic>
        </IconButton>
        <IconButton label="全屏" className="ml-4">
          <Ic w={18} h={18}>
            <path d="M1 6V1h5M12 1h5v5M17 12v5h-5M6 17H1v-5M1 1l5.500 5.500M17 1l-5.500 5.500M17 17l-5.500-5.500M1 17l5.500-5.500" />
          </Ic>
        </IconButton>
      </div>
      <span className="pointer-events-none absolute bottom-1.5 right-[15px] whitespace-nowrap text-[19px] leading-6 text-[#8f8f8f]">
        CSDN @清风微凉 aaa
      </span>
    </footer>
  );
}

export default function App() {
  return (
    <div className="flex h-screen flex-col overflow-hidden bg-[#f5f7f9] font-['Noto_Sans','Noto_Sans_CJK_SC',sans-serif] text-[15px] leading-5 text-[#262e3b]">
      <MenuBar />
      <Ribbon />
      <FormulaBar />
      <SheetArea />
      <SheetTabs />
      <StatusBar />
    </div>
  );
}
